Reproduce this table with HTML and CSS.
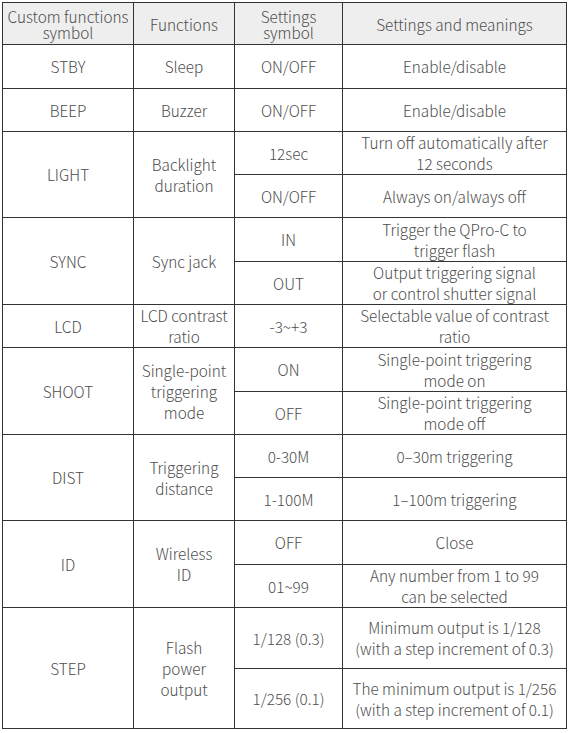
FILE: index.html
```html
<!DOCTYPE html>
<html>
<head>
<meta charset="utf-8">
<link rel="stylesheet" href="styles.css">
</head>
<body>
<table class="spec">
  <colgroup>
    <col class="c1"><col class="c2"><col class="c3"><col class="c4">
  </colgroup>
  <thead>
    <tr class="h-head">
      <th>Custom functions<br>symbol</th>
      <th>Functions</th>
      <th>Settings<br>symbol</th>
      <th>Settings and meanings</th>
    </tr>
  </thead>
  <tbody>
    <tr class="h44"><td>STBY</td><td>Sleep</td><td>ON/OFF</td><td>Enable/disable</td></tr>
    <tr class="h43"><td>BEEP</td><td>Buzzer</td><td>ON/OFF</td><td>Enable/disable</td></tr>
    <tr class="h43"><td rowspan="2">LIGHT</td><td rowspan="2">Backlight<br>duration</td><td>12sec</td><td>Turn off automatically after<br>12 seconds</td></tr>
    <tr class="h43"><td>ON/OFF</td><td>Always on/always off</td></tr>
    <tr class="h44"><td rowspan="2">SYNC</td><td rowspan="2">Sync jack</td><td>IN</td><td>Trigger the QPro-C to<br>trigger flash</td></tr>
    <tr class="h43"><td>OUT</td><td>Output triggering signal<br>or control shutter signal</td></tr>
    <tr class="h43"><td>LCD</td><td>LCD contrast<br>ratio</td><td>-3~+3</td><td>Selectable value of contrast<br>ratio</td></tr>
    <tr class="h44"><td rowspan="2">SHOOT</td><td rowspan="2">Single-point<br>triggering<br>mode</td><td>ON</td><td>Single-point triggering<br>mode on</td></tr>
    <tr class="h43"><td>OFF</td><td>Single-point triggering<br>mode off</td></tr>
    <tr class="h43"><td rowspan="2">DIST</td><td rowspan="2">Triggering<br>distance</td><td>0-30M</td><td>0–30m triggering</td></tr>
    <tr class="h43"><td>1-100M</td><td>1–100m triggering</td></tr>
    <tr class="h44"><td rowspan="2">ID</td><td rowspan="2">Wireless<br>ID</td><td>OFF</td><td>Close</td></tr>
    <tr class="h43"><td>01~99</td><td>Any number from 1 to 99<br>can be selected</td></tr>
    <tr class="h61"><td rowspan="2">STEP</td><td rowspan="2">Flash<br>power<br>output</td><td>1/128 (0.3)</td><td>Minimum output is 1/128<br>(with a step increment of 0.3)</td></tr>
    <tr class="h60"><td>1/256 (0.1)</td><td>The minimum output is 1/256<br>(with a step increment of 0.1)</td></tr>
  </tbody>
</table>
</body>
</html>
```

FILE: styles.css
```css
html, body {
  margin: 0;
  padding: 0;
  background: #ffffff;
}
body {
  padding: 2px 0 0 2px;
}
.spec {
  border-collapse: collapse;
  table-layout: fixed;
  width: 564px;
  font-family: "Noto Sans CJK SC", "Noto Sans", sans-serif;
  font-weight: 300;
  font-size: 15.3px;
  color: #4d4d4d;
}
.c1 { width: 131px; }
.c2 { width: 101px; }
.c3 { width: 108px; }
.c4 { width: 224px; }
.spec th, .spec td {
  border: 1px solid #333333;
  text-align: center;
  vertical-align: middle;
  padding: 0 1px;
  line-height: 21px;
}
.spec th {
  font-weight: 300;
  background: #eeeeee;
  line-height: 16px;
  white-space: nowrap;
}
.h-head { height: 42px; }
.h44 { height: 44px; }
.h43 { height: 43px; }
.h61 { height: 61px; }
.h60 { height: 60px; }
```
